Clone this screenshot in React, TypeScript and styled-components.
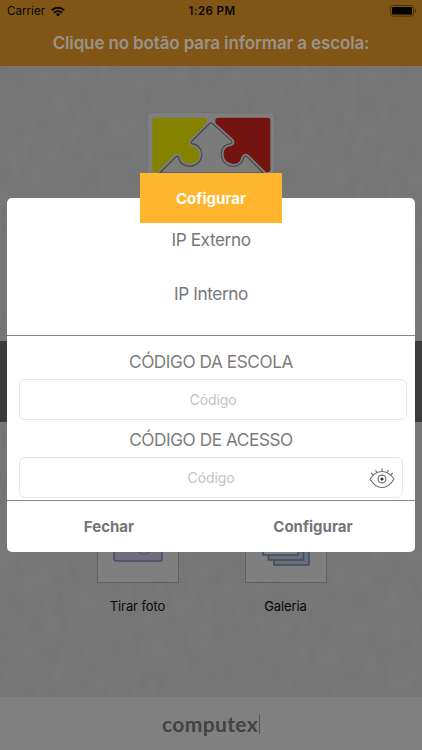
import React from "react";
import styled, { createGlobalStyle } from "styled-components";

const GlobalStyle = createGlobalStyle`
  * { box-sizing: border-box; }
  body { margin: 0; font-family: Inter, "Liberation Sans", sans-serif; }
`;

const Screen = styled.div`
  position: relative;
  width: 422px;
  height: 750px;
  overflow: hidden;
  display: flex;
  flex-direction: column;
  background: #777;
`;

const Header = styled.header`
  height: 66px;
  flex: none;
  background: #805516;
`;

const StatusBar = styled.div`
  height: 22px;
  padding: 0 5px 0 7px;
  display: grid;
  grid-template-columns: 1fr auto 1fr;
  align-items: center;
  color: #0a0703;
  font-size: 11.5px;
`;

const Carrier = styled.div`
  display: flex;
  align-items: center;
  gap: 6px;
  letter-spacing: 0.05px;
`;

const Clock = styled.div`
  font-weight: 600;
  letter-spacing: 0.4px;
`;

const Battery = styled.svg`
  justify-self: end;
`;

const Title = styled.h1`
  margin: 0;
  height: 43px;
  line-height: 43px;
  text-align: center;
  color: #9a938b;
  font-size: 17px;
  font-weight: 600;
  letter-spacing: -0.14px;
  white-space: nowrap;
`;

const Content = styled.main`
  flex: 1;
  display: flex;
  flex-direction: column;
  align-items: center;
  position: relative;
`;

const Texture = styled.svg`
  position: absolute;
  inset: 0;
  width: 100%;
  height: 100%;
`;

const Logo = styled.svg`
  position: relative;
  margin-top: 46px;
  flex: none;
`;

const Band = styled.div`
  position: relative;
  align-self: stretch;
  height: 81px;
  margin-top: 101px;
  background: #3b3b3b;
  flex: none;
`;

const Sources = styled.div`
  position: relative;
  display: flex;
  gap: 66px;
  margin: 79px 0 0 1px;
`;

const Source = styled.div`
  width: 82px;
  display: flex;
  flex-direction: column;
  align-items: center;
`;

const SourceFrame = styled.div`
  width: 82px;
  height: 82px;
  border: 1px solid #606060;
  background: #7f7f7f;
`;

const SourceLabel = styled.span`
  margin-top: 15px;
  line-height: 17px;
  font-size: 13px;
  letter-spacing: -0.1px;
  color: #080808;
  white-space: nowrap;
`;

const Footer = styled.footer`
  height: 53px;
  flex: none;
  background: #808080;
  display: flex;
  align-items: center;
  justify-content: center;
`;

const Brand = styled.div`
  height: 20px;
  line-height: 19px;
  padding-right: 1px;
  border-right: 1px solid #555;
  color: #434343;
  font-family: Lato, sans-serif;
  font-weight: 700;
  font-size: 21px;
  letter-spacing: 0.35px;
`;

const Dialog = styled.section`
  position: absolute;
  left: 7px;
  top: 173px;
  width: 408px;
  height: 379px;
  padding-top: 25px;
  display: flex;
  flex-direction: column;
`;

const Tab = styled.div`
  position: absolute;
  left: 133px;
  top: 0;
  width: 142px;
  height: 50px;
  line-height: 51px;
  text-align: center;
  background: #ffb62e;
  color: #fffdf7;
  font-size: 15px;
  font-weight: 700;
`;

const Sheet = styled.div`
  flex: 1;
  display: flex;
  flex-direction: column;
  background: #fff;
  border-radius: 5px;
`;

const Addresses = styled.div`
  height: 138px;
  padding-top: 30px;
  display: flex;
  flex-direction: column;
  gap: 32px;
  border-bottom: 1px solid #888;
`;

const Label = styled.div<{ $spacing: number }>`
  height: 22px;
  line-height: 24px;
  text-align: center;
  color: #77777a;
  font-size: 17.2px;
  font-weight: 400;
  letter-spacing: ${(p) => p.$spacing}px;
`;

const Form = styled.div`
  height: 165px;
  padding: 14px 8px 0 12px;
  border-bottom: 1px solid #888;
`;

const FieldLabel = styled(Label)`
  width: 384px;
  margin-bottom: 7px;
  color: #7c7c7c;
`;

const Field = styled.div<{ $width: number }>`
  position: relative;
  width: ${(p) => p.$width}px;
  height: 41px;
  margin-bottom: 8px;
  padding-bottom: 1px;
  border: 1px solid #e8e8e8;
  border-radius: 6px;
  display: flex;
  align-items: center;
  justify-content: center;
  color: #c3c3c7;
  font-size: 14px;
  letter-spacing: -0.1px;
`;

const Eye = styled.svg`
  position: absolute;
  right: 7px;
  top: 9px;
`;

const Actions = styled.div`
  flex: 1;
  display: grid;
  grid-template-columns: 1fr 1fr;
`;

const Action = styled.button`
  border: 0;
  padding: 0 0 1px;
  background: transparent;
  color: #757575;
  font: 700 15px Inter, sans-serif;
`;

const arrow =
  "M88 220 L137 171 Q142 167 145 174 C151 211 210 206 214 169 C216 148 202 134 185 132 Q180 129 185 124 L236 73 Q242 66 248 73 L303 123 Q308 129 301 132 C278 135 271 151 273 169 C278 207 334 211 340 174 Q344 167 350 171 L399 220 Z";

export default function App() {
  return (
    <>
      <GlobalStyle />
      <Screen>
        <Header>
          <StatusBar>
            <Carrier>
              Carrier
              <svg width="14" height="11" viewBox="0 0 14 11" fill="none" stroke="#0a0703" strokeWidth="1.9">
                <path d="M.8 4.2a9 9 0 0 1 12.4 0M3 6.7a5.8 5.8 0 0 1 8 0" />
                <path d="M7 10.6 4.8 8.4a3.2 3.2 0 0 1 4.4 0z" fill="#0a0703" stroke="none" />
              </svg>
            </Carrier>
            <Clock>1:26 PM</Clock>
            <Battery width="27" height="12" viewBox="0 0 27 12">
              <rect x=".5" y=".5" width="23" height="10.6" rx="2.6" fill="none" stroke="#4a310d" />
              <rect x="2" y="2" width="20" height="7.6" rx="1.2" fill="#050301" />
              <path d="M25 4v3.8q1.4-.5 1.4-1.9T25 4" fill="#4a310d" />
            </Battery>
          </StatusBar>
          <Title>Clique no botão para informar a escola:</Title>
        </Header>
        <Content>
          <Texture>
            <filter id="paper" x="0" y="0" width="100%" height="100%">
              <feTurbulence type="fractalNoise" baseFrequency=".09 .04" numOctaves="3" seed="8" />
              <feColorMatrix values="0 0 0 0 0  0 0 0 0 0  0 0 0 0 0  .05 0 0 0 -.01" />
            </filter>
            <rect width="100%" height="100%" fill="#787878" />
            <rect width="100%" height="100%" filter="url(#paper)" />
          </Texture>
          <Logo width="128" height="128" viewBox="50 37 384 384">
            <rect x="51" y="39" width="382" height="380" rx="10" fill="#7e7e7e" stroke="#727272" strokeWidth="3" />
            <rect x="66" y="54" width="164" height="164" rx="9" fill="#858200" />
            <rect x="255" y="54" width="165" height="164" rx="9" fill="#741411" />
            <path d={arrow} fill="#7e7e7e" stroke="#7e7e7e" strokeWidth="14" strokeLinejoin="round" />
            <path d={arrow} fill="#7b7b7b" stroke="#454545" strokeWidth="3.4" strokeLinejoin="round" />
          </Logo>
          <Band />
          <Sources>
            <Source>
              <SourceFrame>
                <svg width="80" height="80" viewBox="0 0 80 80" fill="none">
                  <rect x="16" y="20" width="48" height="39" rx="2" fill="#716d7e" stroke="#4d4964" strokeWidth="1.5" />
                  <circle cx="46" cy="42" r="10" stroke="#4f667e" strokeWidth="1.5" />
                </svg>
              </SourceFrame>
              <SourceLabel>Tirar foto</SourceLabel>
            </Source>
            <Source>
              <SourceFrame>
                <svg width="80" height="80" viewBox="0 0 80 80" fill="#66707a" stroke="#424c58" strokeWidth="1.5">
                  <path d="M28 34h35v29H28z" />
                  <path d="M22.5 29h35v29h-35z" />
                  <path d="M17 24h35v29H17z" fill="#7f7f7f" />
                </svg>
              </SourceFrame>
              <SourceLabel>Galeria</SourceLabel>
            </Source>
          </Sources>
        </Content>
        <Footer>
          <Brand>computex</Brand>
        </Footer>
        <Dialog role="dialog">
          <Sheet>
            <Addresses>
              <Label $spacing={-0.4}>IP Externo</Label>
              <Label $spacing={-0.4}>IP Interno</Label>
            </Addresses>
            <Form>
              <FieldLabel $spacing={-0.42}>CÓDIGO DA ESCOLA</FieldLabel>
              <Field $width={388}>Código</Field>
              <FieldLabel $spacing={-0.42}>CÓDIGO DE ACESSO</FieldLabel>
              <Field $width={384}>
                Código
                <Eye width="26" height="22" viewBox="0 0 26 22" fill="none" stroke="#6b6b6b" strokeWidth="1.1">
                  <path d="M1 12Q6 4.5 13 4.5T25 12Q20 20.5 13 20.5T1 12Z" />
                  <circle cx="13" cy="12" r="3.9" />
                  <circle cx="13" cy="12" r="1.6" fill="#333" stroke="none" />
                  <path d="M13 4.5V1.5M7.8 5.8 6.6 3M18.2 5.8 19.4 3M4.3 8.2 2.2 6M21.7 8.2 23.8 6" />
                </Eye>
              </Field>
            </Form>
            <Actions>
              <Action>Fechar</Action>
              <Action>Configurar</Action>
            </Actions>
          </Sheet>
          <Tab>Cofigurar</Tab>
        </Dialog>
      </Screen>
    </>
  );
}
